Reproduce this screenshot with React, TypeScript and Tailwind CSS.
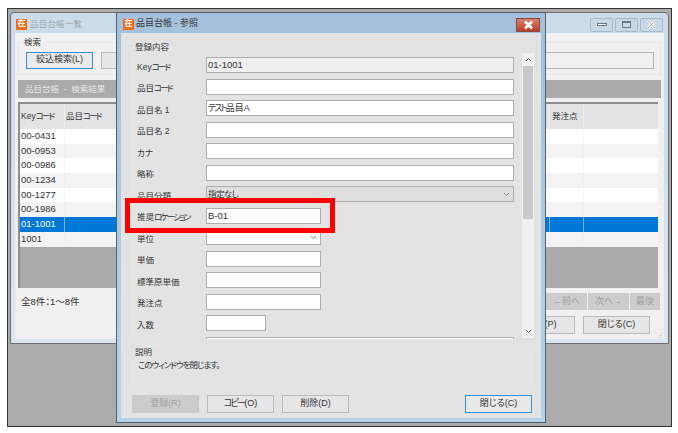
import type { ReactNode } from "react";

const FONT = "font-['Liberation_Sans','Noto_Sans_CJK_JP',sans-serif] [font-feature-settings:'palt']";

function K({ children }: { children: ReactNode }) {
  return <span className="tracking-[-1.8px]">{children}</span>;
}

function AppIcon() {
  return (
    <span className="flex h-[11px] w-[11px] shrink-0 items-center justify-center bg-[#ee6c1c] text-[8px] leading-none font-bold text-white">
      在
    </span>
  );
}

function Btn({
  label,
  w = 67,
  h = 18,
  focus = false,
  disabled = false,
}: {
  label: ReactNode;
  w?: number;
  h?: number;
  focus?: boolean;
  disabled?: boolean;
}) {
  const cls = focus
    ? "border-[#2f8fdc] bg-[#e9e9e9] text-[#333]"
    : disabled
      ? "border-[#cbcbcb] bg-[#cccccc] text-[#a0a0a0]"
      : "border-[#bbbbbb] bg-[#e6e6e6] text-[#333]";
  return (
    <div
      className={`flex shrink-0 items-center justify-center border text-[9px] ${cls}`}
      style={{ width: w, height: h }}
    >
      {label}
    </div>
  );
}

function Field({
  label,
  value = "",
  w = 308,
  ro = false,
  select = false,
  disabled = false,
}: {
  label: ReactNode;
  value?: ReactNode;
  w?: number;
  ro?: boolean;
  select?: boolean;
  disabled?: boolean;
}) {
  return (
    <div className="flex h-[16px] shrink-0 items-center">
      <div className="w-[69px] shrink-0 pt-[4px] text-[8.5px] whitespace-nowrap text-[#333]">{label}</div>
      <div
        className={`relative flex h-[16px] shrink-0 items-center border border-[#aeaeae] pt-[1px] pl-[1px] text-[9.5px] text-[#333] ${
          disabled ? "bg-[#dedede]" : ro ? "bg-[#efefef]" : "bg-white"
        }`}
        style={{ width: w }}
      >
        {value}
        {select && (
          <svg className="absolute top-[5px] right-[3px]" width="7" height="5" viewBox="0 0 7 5" fill="none">
            <path d="M1 1l2.5 2.5L6 1" stroke="#8a8a8a" strokeWidth="1" />
          </svg>
        )}
      </div>
    </div>
  );
}

const rows = ["00-0431", "00-0953", "00-0986", "00-1234", "00-1277", "00-1986", "01-1001", "1001"];

function WinCtl({ children }: { children: ReactNode }) {
  return (
    <div className="flex h-[14px] w-[23px] items-center justify-center rounded-[2px] border border-[#a6b8ca] bg-[#c9d8e7]">
      {children}
    </div>
  );
}

function ListWindow() {
  return (
    <div className="absolute top-[12px] left-[10px] flex h-[332px] w-[659px] flex-col rounded-t-[4px] border border-[#6e6e6e] bg-gradient-to-b from-[#cbdbea] to-[#d9e6f2] px-[4px] pb-[4px]">
      <div className="flex h-[20px] shrink-0 items-center gap-[3px] pt-[2px] pl-[1px]">
        <AppIcon />
        <span className="text-[8.5px] tracking-[0.2px] text-[#a0a8b0]">品目台帳一覧</span>
        <div className="mt-[1px] ml-auto flex gap-[2px] pr-[1px]">
          <WinCtl>
            <span className="h-[3px] w-[10px] border border-[#6a7a8a] bg-white" />
          </WinCtl>
          <WinCtl>
            <span className="h-[7px] w-[9px] border border-t-2 border-[#6a7a8a]" />
          </WinCtl>
          <WinCtl>
            <svg width="11" height="9" viewBox="0 0 11 9">
              <path d="M2 1l7 7M9 1L2 8" stroke="#fff" strokeWidth="2.6" />
              <path d="M2 1l7 7M9 1L2 8" stroke="#8a98a6" strokeWidth="0.8" />
            </svg>
          </WinCtl>
        </div>
      </div>
      <div className="relative flex min-h-0 flex-1 flex-col bg-[#f0f0f0] px-[3px]">
        <div className="relative mt-[9px] flex h-[33px] shrink-0 items-center gap-[8px] border border-[#e6e6e6] pt-[3px] pr-[6px] pl-[7px]">
          <span className="absolute top-[-7px] left-[4px] bg-[#f0f0f0] px-[1px] text-[8.5px] text-[#333]">検索</span>
          <Btn label="絞込検索(L)" focus w={67} h={17} />
          <Btn label="" w={67} h={17} />
          <div className="h-[17px] flex-1 border border-[#b5b5b5] bg-[#f0f0f0]" />
        </div>
        <div className="mt-[5px] flex h-[18px] shrink-0 items-center bg-[#aaaaaa] pl-[7px] text-[8.5px] whitespace-pre text-[#e8e8e8] [font-feature-settings:normal]">
          {"品目台帳  -  検索結果  （"}
        </div>
        <div className="mt-[4px] flex h-[186px] w-[640px] shrink-0 flex-col border-t-2 border-l-2 border-[#8e8e8e] bg-[#aaaaaa]">
          <div className="flex h-[25px] shrink-0 items-center bg-[#e3e3e3] text-[8.5px] whitespace-nowrap text-[#333]">
            <div className="h-full w-[45px] border-r border-[#eeeeee] pl-[1px] leading-[25px]">
              Key<K>コード</K>
            </div>
            <div className="h-full w-[485px] border-r border-[#eeeeee] pl-[1px] leading-[25px]">
              品目<K>コード</K>
            </div>
            <div className="h-full w-[34px] border-r border-[#eeeeee] pl-[2px] leading-[25px]">発注点</div>
          </div>
          {rows.map((r, i) => (
            <div
              key={r}
              className={`flex h-[14.7px] shrink-0 items-center text-[9.5px] ${
                r === "01-1001"
                  ? "bg-[#0078d7] text-white"
                  : i % 2 === 0
                    ? "bg-white text-[#333]"
                    : "bg-[#f3f3f3] text-[#333]"
              }`}
            >
              <div className="h-full w-[45px] border-r border-[#eeeeee]/50 pl-[1px] leading-[14.7px]">{r}</div>
              <div className="h-full w-[485px] border-r border-[#eeeeee]/50" />
              <div className="h-full w-[34px] border-r border-[#eeeeee]/50" />
            </div>
          ))}
        </div>
        <div className="mt-[5px] flex h-[17px] shrink-0 items-center">
          <span className="pt-[2px] pl-[3px] text-[9.5px] text-[#333]">全8件：1～8件</span>
          <div className="ml-auto flex gap-[1px] pr-[1px]">
            <Btn label="←前へ" disabled w={41} h={17} />
            <Btn label="次へ→" disabled w={41} h={17} />
            <Btn label="最後" disabled w={30} h={17} />
          </div>
        </div>
        <div className="mt-[6px] flex shrink-0 justify-end gap-[8px] pr-[11px]">
          <Btn label="印刷(P)" w={67} />
          <Btn label="閉じる(C)" w={67} />
        </div>
        <svg className="absolute right-[1px] bottom-[1px]" width="6" height="6" viewBox="0 0 6 6">
          <path d="M5 1v1M3 3v1M5 3v1M1 5v1M3 5v1M5 5v1" stroke="#c4c4c4" strokeWidth="1" />
        </svg>
      </div>
    </div>
  );
}

function DetailWindow() {
  return (
    <div className="absolute top-[12px] left-[116px] flex h-[411px] w-[430px] flex-col border border-[#50606e] bg-gradient-to-b from-[#a4c0da] to-[#b8d2ea] px-[4px] pb-[4px]">
      <div className="relative flex h-[20px] shrink-0 items-center gap-[2px] pt-[2px] pl-[2px]">
        <AppIcon />
        <span className="text-[9px] text-[#333]">品目台帳 - 参照</span>
        <div className="absolute top-[5px] right-[1px] flex h-[14px] w-[24px] items-center justify-center border border-[#8a4a40] bg-gradient-to-b from-[#d98070] to-[#bb3c28]">
          <svg width="13" height="10" viewBox="0 0 13 10">
            <path d="M3 1.5l7 7M10 1.5l-7 7" stroke="#fff" strokeWidth="2.6" />
          </svg>
        </div>
      </div>
      <div className="flex min-h-0 flex-1 flex-col bg-[#e3e3e3] pr-[5px] pl-[7px]">
        <div className="relative mt-[12px] flex h-[295px] shrink-0 border border-[#e0e0e0] pt-[11px] pl-[8px]">
          <span className="absolute top-[-5px] left-[5px] bg-[#e3e3e3] px-[1px] text-[8.5px] text-[#333]">登録内容</span>
          <div className="flex h-[282px] w-[377px] shrink-0 flex-col gap-[5.5px] overflow-hidden">
            <Field label={<>Key<K>コード</K></>} value="01-1001" ro />
            <Field label={<>品目<K>コード</K></>} />
            <Field label="品目名 1" value={<span className="text-[9px]"><K>テスト</K>品目A</span>} />
            <Field label="品目名 2" />
            <Field label="カナ" />
            <Field label="略称" />
            <Field label="品目分類" value={<span className="text-[8.5px] tracking-[-0.6px]">指定なし</span>} select disabled />
            <Field label={<>推奨<K>ロケーション</K></>} value="B-01" w={115} />
            <Field label="単位" select w={115} />
            <Field label="単価" w={115} />
            <Field label="標準原単価" w={115} />
            <Field label="発注点" w={115} />
            <Field label="入数" w={60} />
            <Field label="" />
          </div>
          <div className="mt-[-4px] ml-[8px] flex h-[285px] w-[12px] shrink-0 flex-col items-center bg-[#f0f0f0]">
            <div className="flex h-[13px] w-full items-center justify-center">
              <svg width="7" height="5" viewBox="0 0 7 5" fill="none">
                <path d="M1 4l2.5-2.5L6 4" stroke="#555" strokeWidth="1" />
              </svg>
            </div>
            <div className="h-[153px] w-[10px] bg-[#c8c8c8]" />
            <div className="mt-auto flex h-[13px] w-full items-center justify-center">
              <svg width="7" height="5" viewBox="0 0 7 5" fill="none">
                <path d="M1 1l2.5 2.5L6 1" stroke="#555" strokeWidth="1" />
              </svg>
            </div>
          </div>
        </div>
        <div className="relative mt-[11px] h-[34px] shrink-0 border border-[#e0e0e0] pt-[7px] pl-[9px] text-[8.5px] text-[#333]">
          <span className="absolute top-[-6px] left-[5px] bg-[#e3e3e3] px-[1px] text-[#333]">説明</span>
          <span className="tracking-[-1px]">このウィンドウを閉じます。</span>
        </div>
        <div className="mt-[10px] flex shrink-0 gap-[8px] pl-[4px]">
          <Btn label="登録(R)" disabled />
          <Btn label={<><K>コピー</K>(O)</>} />
          <Btn label="削除(D)" />
          <div className="ml-auto pr-[4px]">
            <Btn label="閉じる(C)" focus />
          </div>
        </div>
      </div>
    </div>
  );
}

export default function App() {
  return (
    <div className={`h-[433px] w-[678px] overflow-hidden bg-white pt-[8px] pl-[7px] ${FONT}`}>
      <div className="h-[419px] w-[665px] border border-[#333333] bg-[#ababab]" />
      <ListWindow />
      <DetailWindow />
      <div className="absolute top-[198px] left-[125px] h-[35px] w-[210px] border-[5px] border-[#ff0000]" />
    </div>
  );
}
